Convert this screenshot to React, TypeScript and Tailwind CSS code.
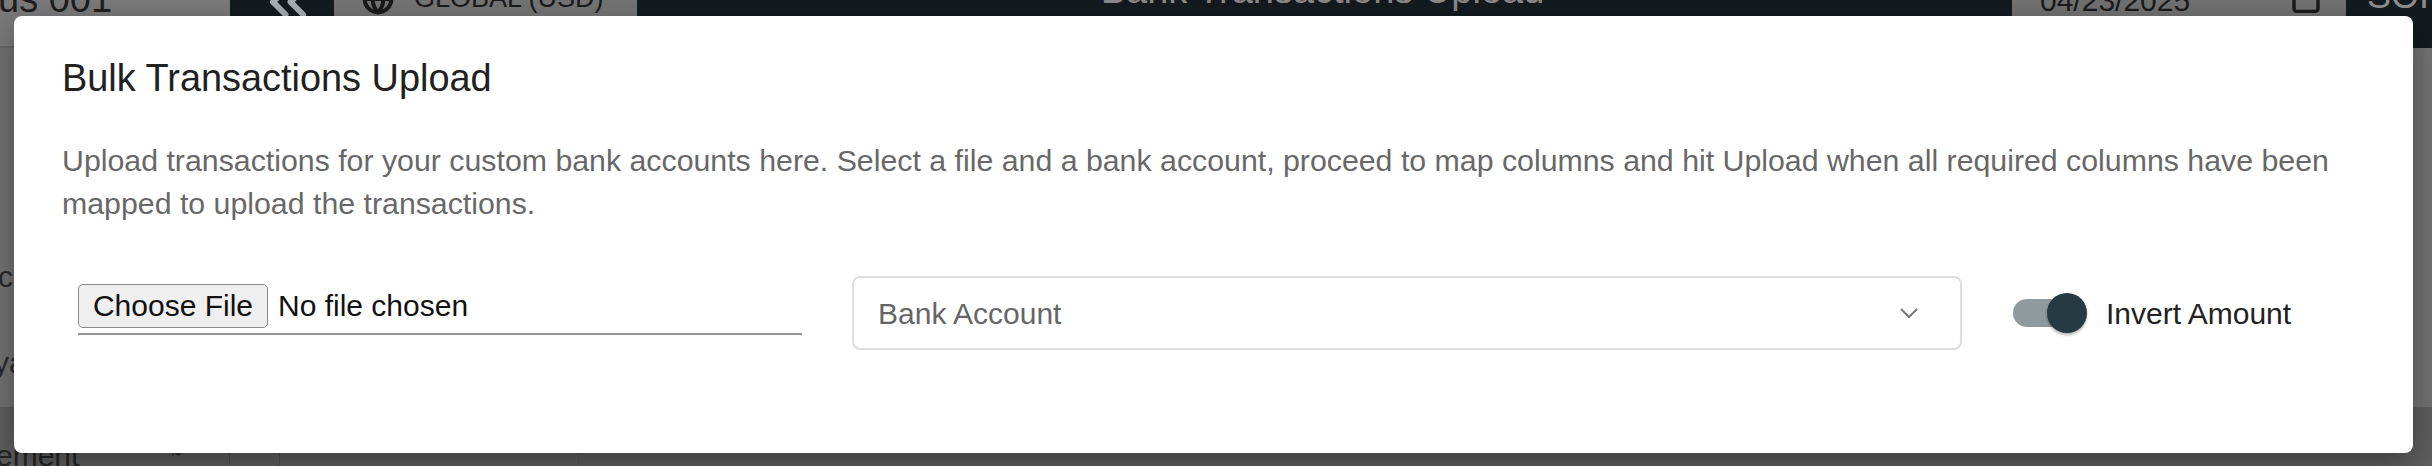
import { ChevronsLeft, Globe, Calendar } from "lucide-react";

const Toggle = () => (
  <div className="relative h-[28px] w-[60px] shrink-0 rounded-full bg-[#8f9a9e]">
    <div className="absolute left-[34px] top-[-6px] h-[40px] w-[40px] rounded-full bg-[#263a42] shadow-[0_2px_3px_rgba(0,0,0,0.3)]" />
  </div>
);

export default function App() {
  return (
    <div className="relative h-[466px] w-[2432px] overflow-hidden bg-[#6e6e6e] font-['Liberation_Sans',Arial,sans-serif]">
      {/* app header behind the dialog */}
      <header className="flex h-[48px] overflow-hidden">
        <div className="h-full w-[230px] overflow-hidden border-b-2 border-[#666] bg-[#7a7a7a]">
          <div className="-ml-[2px] -mt-[20px] text-[38px] leading-none text-[#1e1e1e]">us 001</div>
        </div>
        <div className="h-full w-[104px] overflow-hidden bg-[#131b1e]">
          <ChevronsLeft size={60} strokeWidth={2.4} className="ml-[28px] -mt-[28px] text-[#a9afb1]" />
        </div>
        <div className="flex h-full w-[303px] items-start gap-[20px] overflow-hidden bg-[#747474] pl-[28px]">
          <Globe size={32} strokeWidth={3} className="-mt-[17px] text-[#1a1a1a]" />
          <div className="-mt-[15px] text-[27px] leading-none text-[#1a1a1a]">GLOBAL (USD)</div>
        </div>
        <div className="flex h-full flex-1 justify-center overflow-hidden bg-[#131b1e]">
          <div className="-ml-[4px] -mt-[29px] text-[38px] leading-none text-[#8a8a8a]">Bank Transactions Upload</div>
        </div>
        <div className="flex h-full w-[334px] items-start justify-between overflow-hidden bg-[#717171] pl-[28px] pr-[24px]">
          <div className="-mt-[14px] text-[30px] leading-none text-[#1a1a1a]">04/23/2025</div>
          <Calendar size={32} strokeWidth={2.5} className="-mt-[18px] text-[#1a1a1a]" />
        </div>
        <div className="h-full w-[86px] overflow-hidden bg-[#131b1e] pl-[21px]">
          <div className="-mt-[22px] text-[36px] leading-none text-[#8f8f8f]">SOI</div>
        </div>
      </header>

      {/* page body behind the dialog */}
      <div className="flex h-[359px] flex-col bg-[#727272] text-[30px] leading-none text-[#2a2a2a]">
        <div className="-ml-[2px] mt-[214px]">ce</div>
        <div className="-ml-[6px] mt-[56px]">ya</div>
      </div>
      <div className="flex h-[59px] bg-[#5e5e5e] text-[30px] leading-none text-[#252525]">
        <div className="flex w-[230px] items-start justify-between border-r border-[#4e4e4e] pr-[46px] pt-[34px]">
          <span className="-ml-[4px]">ement</span>
          <span className="text-[18px] text-[#333]">⇅</span>
        </div>
        <div className="w-[50px] border-r border-[#4e4e4e]" />
        <div className="w-[299px] border-r border-[#555]" />
        <div className="flex-1" />
      </div>

      {/* dialog */}
      <div className="absolute left-[14px] top-[16px] h-[437px] w-[2399px] rounded-[8px] bg-white px-[48px] pt-[40px] shadow-[0_10px_30px_rgba(0,0,0,0.35)]">
        <h2 className="text-[37.9px] leading-[44px] text-[#212121]">Bulk Transactions Upload</h2>
        <p className="mt-[39px] text-[30.3px] leading-[43px] text-[#686868]">
          Upload transactions for your custom bank accounts here. Select a file and a bank account, proceed to map columns and hit Upload when all required columns have been mapped to upload the transactions.
        </p>

        <div className="mt-[51px] flex h-[74px] items-center pl-[16px]">
          {/* file input */}
          <div className="mt-[8px] flex w-[724px] items-center gap-[10px] self-start border-b-2 border-[#959595] pb-[5px]">
            <button className="flex h-[44px] w-[190px] items-center justify-center rounded-[5px] border-[1.5px] border-[#8a8a8a] bg-[#efefef] text-[30px] leading-none text-[#111]">
              Choose File
            </button>
            <span className="text-[30px] leading-none text-[#111]">No file chosen</span>
          </div>

          {/* bank account select */}
          <div className="ml-[50px] flex h-[74px] w-[1110px] items-center justify-between rounded-[8px] border-2 border-[#dedede] pl-[24px] pr-[42px]">
            <span className="text-[30px] text-[#666]">Bank Account</span>
            <svg width="18" height="11" viewBox="0 0 18 11" fill="none">
              <polyline points="1.5,1.5 9,9 16.5,1.5" stroke="#777" strokeWidth="2" strokeLinecap="round" strokeLinejoin="round" />
            </svg>
          </div>

          {/* invert amount switch */}
          <div className="ml-[51px] flex items-center">
            <Toggle />
            <span className="ml-[33px] text-[30px] text-[#222]">Invert Amount</span>
          </div>
        </div>
      </div>
    </div>
  );
}
